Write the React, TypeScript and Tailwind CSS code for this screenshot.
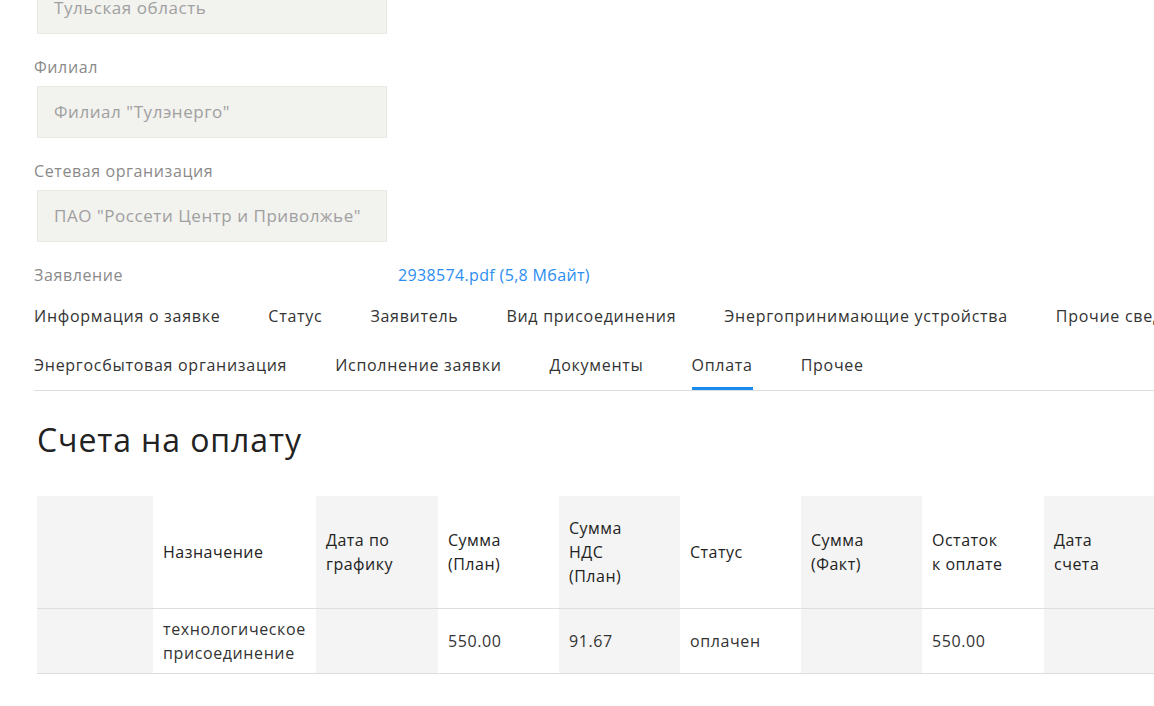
import React from "react";

const tabs1 = ["Информация о заявке", "Статус", "Заявитель", "Вид присоединения", "Энергопринимающие устройства", "Прочие сведения"];
const tabs2 = ["Энергосбытовая организация", "Исполнение заявки", "Документы", "Оплата", "Прочее"];

const cols: { w: number; head: string[]; val: string[] }[] = [
  { w: 116, head: [], val: [] },
  { w: 163, head: ["Назначение"], val: ["технологическое", "присоединение"] },
  { w: 122, head: ["Дата по", "графику"], val: [] },
  { w: 121, head: ["Сумма", "(План)"], val: ["550.00"] },
  { w: 121, head: ["Сумма", "НДС", "(План)"], val: ["91.67"] },
  { w: 121, head: ["Статус"], val: ["оплачен"] },
  { w: 121, head: ["Сумма", "(Факт)"], val: [] },
  { w: 122, head: ["Остаток", "к оплате"], val: ["550.00"] },
  { w: 121, head: ["Дата", "счета"], val: [] },
  { w: 121, head: [], val: [] },
];

function Field({ label, value, first }: { label?: string; value: string; first?: boolean }) {
  return (
    <div className={first ? "-mt-[18px]" : "mt-[23px]"}>
      {label && <div className="text-[16px] leading-[20px] tracking-[0.6px] text-[#8a8a8a] mb-[9px]">{label}</div>}
      <div className="ml-[3px] w-[350px] h-[52px] bg-[#f2f2ef] border border-[#e8e8e4] flex items-center px-[16px] text-[17px] tracking-[0.55px] text-[#a0a0a0] whitespace-nowrap">
        {value}
      </div>
    </div>
  );
}

export default function App() {
  return (
    <div className="w-[1154px] h-[706px] overflow-hidden bg-white" style={{ fontFamily: "'Open Sans', 'DejaVu Sans', sans-serif" }}>
      <div className="w-[1400px] pl-[34px]">
        <Field first value="Тульская область" />
        <Field label="Филиал" value='Филиал "Тулэнерго"' />
        <Field label="Сетевая организация" value='ПАО "Россети Центр и Приволжье"' />
        <div className="mt-[23px] flex text-[16px] leading-[20px]">
          <div className="w-[364px] text-[#8a8a8a] tracking-[0.6px]">Заявление</div>
          <a className="text-[#2b8ef0] tracking-[0.35px]">2938574.pdf (5,8 Мбайт)</a>
        </div>
        <div className="mt-[7px] w-[1240px] border-b border-[#dedede] text-[16px] leading-[20px] tracking-[0.72px] text-[#333]">
          <div className="flex whitespace-nowrap">
            {tabs1.map((t) => (
              <div key={t} className="pt-[14px] pb-[15px] mr-[48px]">{t}</div>
            ))}
          </div>
          <div className="flex whitespace-nowrap">
            {tabs2.map((t) => (
              <div
                key={t}
                className={
                  "pt-[14px] mr-[48px] " +
                  (t === "Оплата" ? "pb-[12px] border-b-[3px] border-[#1a8cf0]" : "pb-[15px]")
                }
              >
                {t}
              </div>
            ))}
          </div>
        </div>
        <h1 className="mt-[29px] ml-[3px] text-[32px] leading-[40px] tracking-[0.9px] text-[#222]">Счета на оплату</h1>
        <div className="mt-[36px] ml-[3px] flex flex-col w-max">
          <div className="flex border-b border-[#dedede] h-[113px]">
            {cols.map((c, i) => (
              <div
                key={i}
                style={{ width: c.w }}
                className={
                  "flex flex-col justify-center px-[10px] text-[16px] leading-[24px] tracking-[0.5px] font-medium text-[#222] " +
                  (i % 2 === 0 ? "bg-[#f4f4f4]" : "bg-white")
                }
              >
                {c.head.map((h) => (
                  <div key={h} className="whitespace-nowrap">{h}</div>
                ))}
              </div>
            ))}
          </div>
          <div className="flex border-b border-[#dedede] h-[65px]">
            {cols.map((c, i) => (
              <div
                key={i}
                style={{ width: c.w }}
                className={
                  "flex flex-col justify-center px-[10px] text-[16px] leading-[24px] tracking-[0.6px] text-[#333] " +
                  (i % 2 === 0 ? "bg-[#f4f4f4]" : "bg-white")
                }
              >
                {c.val.map((h) => (
                  <div key={h} className="whitespace-nowrap">{h}</div>
                ))}
              </div>
            ))}
          </div>
        </div>
      </div>
    </div>
  );
}
